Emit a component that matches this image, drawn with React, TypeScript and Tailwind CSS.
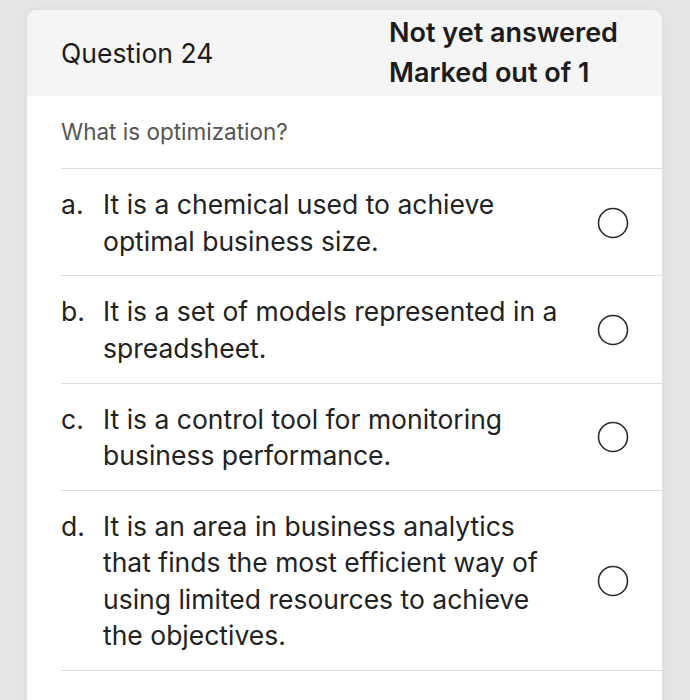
import React from "react";

type Option = { key: string; lines: string[] };

const options: Option[] = [
  { key: "a.", lines: ["It is a chemical used to achieve", "optimal business size."] },
  { key: "b.", lines: ["It is a set of models represented in a", "spreadsheet."] },
  { key: "c.", lines: ["It is a control tool for monitoring", "business performance."] },
  {
    key: "d.",
    lines: [
      "It is an area in business analytics",
      "that finds the most efficient way of",
      "using limited resources to achieve",
      "the objectives.",
    ],
  },
];

function Radio() {
  return (
    <svg width="32" height="32" viewBox="0 0 32 32" className="shrink-0">
      <circle cx="16" cy="16" r="14.5" fill="white" stroke="#2b2b2b" strokeWidth="1.6" />
    </svg>
  );
}

export default function App() {
  return (
    <div
      className="w-[690px] h-[700px] overflow-hidden bg-[#e5e5e5] pt-[10px] pl-[27px] pr-[28px]"
      style={{ fontFamily: "Inter, 'Liberation Sans', sans-serif" }}
    >
      <div className="bg-white rounded-t-[10px] overflow-hidden shadow-[0_0_6px_rgba(0,0,0,0.06)] h-[720px]">
        <div className="bg-[#f5f5f5] h-[86px] flex items-center pl-[34px]">
          <div className="w-[328px] text-[26.5px] text-[#1c1c1c] pt-[2px]">Question 24</div>
          <div className="text-[27px] leading-[40px] font-semibold text-[#1c1c1c]">
            <div>Not yet answered</div>
            <div>Marked out of 1</div>
          </div>
        </div>

        <div className="pl-[34px]">
          <div className="h-[73px] flex items-center text-[22.5px] text-[#555] border-b border-[#dcdcdc]">
            What is optimization?
          </div>

          {options.map((o) => (
            <div
              key={o.key}
              className="flex items-center border-b border-[#dcdcdc] pt-[17px] pb-[16.3px] text-[26.5px] leading-[36.5px] text-[#222]"
            >
              <div className="w-[42px] self-start">{o.key}</div>
              <div className="flex-1">
                {o.lines.map((l) => (
                  <div key={l}>{l}</div>
                ))}
              </div>
              <div className="w-[67px] flex justify-start pl-[2px]">
                <Radio />
              </div>
            </div>
          ))}
        </div>
      </div>
    </div>
  );
}
